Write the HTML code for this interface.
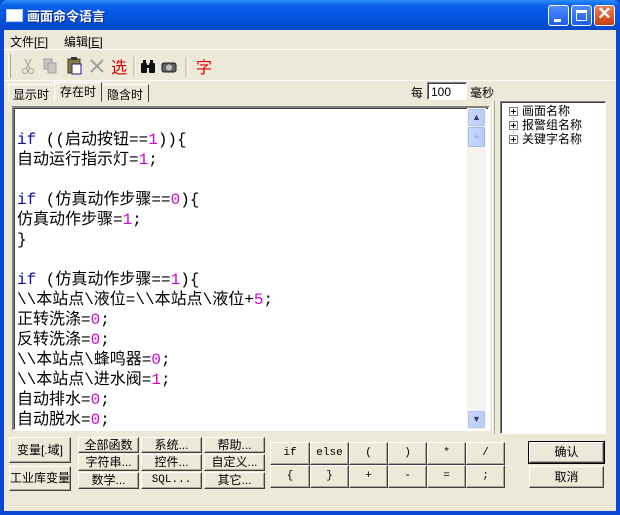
<!DOCTYPE html>
<html><head><meta charset="utf-8"><style>
*{margin:0;padding:0;box-sizing:border-box}
body{width:620px;height:515px;overflow:hidden;background:#0847d6;font-family:"Liberation Sans","Noto Sans CJK SC","WenQuanYi Zen Hei",sans-serif;font-size:12px;color:#000;position:relative}
.a{position:absolute}
#title{left:0;top:0;width:620px;height:30px;background:linear-gradient(#2a8cf7 0,#0a5ee8 20%,#0454e0 60%,#0348c8 100%);border-radius:7px 7px 0 0}
#client{left:4px;top:30px;width:612px;height:481px;background:#ece9d8}
.btn{position:absolute;background:#ece9d8;border:1px solid;border-color:#fff #404040 #404040 #fff;box-shadow:inset -1px -1px 0 #aca899;text-align:center;font-size:12px;white-space:nowrap}
.tb{position:absolute;width:21px;height:21px;border-radius:3px;border:1px solid #fff;background:linear-gradient(#4d8cfa,#1d5ef0)}
.code{left:12px;top:106px;width:478px;height:325px;background:#fff;border:2px solid;border-color:#808080 #fff #fff #808080;box-shadow:inset 1px 1px 0 #404040}
.ln{position:absolute;left:3px;font-size:16px;line-height:20px;white-space:pre;font-family:"Liberation Mono","Noto Sans CJK SC",monospace}
.k{color:#1010a0}.n{color:#d000d0}
.tr{position:absolute;left:8px;font-size:12px;line-height:14px}
.pl{display:inline-block;width:9px;height:9px;border:1px solid #808080;position:relative;vertical-align:-1px;margin-right:4px;background:#fff}
.pl:before{content:"";position:absolute;left:1px;top:3px;width:5px;height:1px;background:#000}
.pl:after{content:"";position:absolute;left:3px;top:1px;width:1px;height:5px;background:#000}
.op{font-family:"Liberation Mono",monospace;font-size:11px;line-height:21px}
</style></head><body>
<div id="title" class="a">
 <div class="a" style="left:6px;top:9px;width:17px;height:13px;background:#fff;border:1px solid #c0d0f0"></div>
 <div class="a" style="left:27px;top:6px;color:#fff;font-size:13px;font-weight:bold;text-shadow:1px 1px #0a2080">画面命令语言</div>
 <div class="tb" style="left:548px;top:5px"><div class="a" style="left:5px;top:13px;width:7px;height:3px;background:#fff"></div></div>
 <div class="tb" style="left:571px;top:5px"><div class="a" style="left:4px;top:4px;width:11px;height:11px;border:1px solid #fff;border-top-width:3px"></div></div>
 <div class="tb" style="left:594px;top:5px;background:linear-gradient(#e8845c,#c83c10)"><div class="a" style="left:0;top:-2px;width:19px;text-align:center;color:#fff;font-size:17px;font-weight:bold">✕</div></div>
</div>
<div id="client" class="a"></div>
<div class="a" style="left:10px;top:33px">文件[<u>F</u>]</div>
<div class="a" style="left:64px;top:33px">编辑[<u>E</u>]</div>
<div class="a" style="left:4px;top:49px;width:612px;height:1px;background:#aca899;border-bottom:1px solid #fff"></div>
<div class="a" style="left:8px;top:54px;width:3px;height:24px;border-left:1px solid #fff;border-right:1px solid #aca899"></div>
<svg class="a" style="left:18px;top:55px" width="210" height="24">
 <g stroke="#a0a0a0" fill="none"><circle cx="7" cy="16" r="2.5"/><circle cx="13" cy="16" r="2.5"/><path d="M8 14 L13 4 M12 14 L7 4"/></g>
 <g fill="#c8c8c8" stroke="#a0a0a0"><rect x="26" y="4" width="8" height="10"/><rect x="30" y="8" width="8" height="10"/></g>
 <rect x="50" y="4" width="12" height="14" fill="#8a7a40" stroke="#404020"/><rect x="54" y="9" width="9" height="10" fill="#fff" stroke="#202080"/><rect x="53" y="2" width="6" height="3" fill="#333"/>
 <path d="M73 5 L85 17 M85 5 L73 17" stroke="#a0a0a0" stroke-width="2"/>
 <text x="93" y="18" fill="#e00000" font-size="16" font-family="Noto Sans CJK SC">选</text>
 <line x1="116" y1="2" x2="116" y2="22" stroke="#aca899"/><line x1="117" y1="2" x2="117" y2="22" stroke="#fff"/>
 <g fill="#101010"><rect x="123" y="8" width="6" height="10" rx="1"/><rect x="131" y="8" width="6" height="10" rx="1"/><rect x="125" y="5" width="3" height="4"/><rect x="132" y="5" width="3" height="4"/><rect x="128" y="10" width="4" height="3"/></g>
 <rect x="144" y="8" width="14" height="9" rx="2" fill="#606060" stroke="#202020"/><circle cx="151" cy="12.5" r="3" fill="#c0c0c0"/>
 <line x1="168" y1="2" x2="168" y2="22" stroke="#aca899"/><line x1="169" y1="2" x2="169" y2="22" stroke="#fff"/>
 <text x="178" y="18" fill="#e00000" font-size="16" font-family="Noto Sans CJK SC">字</text>
</svg>
<div class="a" style="left:4px;top:80px;width:612px;height:1px;background:#aca899;border-bottom:1px solid #fff"></div>
<div class="a" style="left:8px;top:84px;width:44px;height:18px;border-left:1px solid #fff;border-top:1px solid #fff;font-size:12px;padding:1px 0 0 4px">显示时</div>
<div class="a" style="left:54px;top:82px;width:48px;height:20px;border:1px solid;border-color:#fff #404040 transparent #fff;background:#ece9d8;padding:0 0 0 5px">存在时</div>
<div class="a" style="left:103px;top:84px;width:46px;height:18px;border-right:1px solid #404040;border-top:1px solid #fff;padding:1px 0 0 4px">隐含时</div>
<div class="a" style="left:411px;top:84px">每</div>
<div class="a" style="left:427px;top:82px;width:40px;height:18px;background:#fff;border:1px solid;border-color:#808080 #fff #fff #808080;box-shadow:inset 1px 1px 0 #404040;padding:2px 0 0 3px">100</div>
<div class="a" style="left:470px;top:84px">毫秒</div>
<div class="a code">
 <div class="ln" style="top:22px"><span class="k">if</span> ((启动按钮==<span class="n">1</span>)){</div>
 <div class="ln" style="top:42px">自动运行指示灯=<span class="n">1</span>;</div>
 <div class="ln" style="top:82px"><span class="k">if</span> (仿真动作步骤==<span class="n">0</span>){</div>
 <div class="ln" style="top:102px">仿真动作步骤=<span class="n">1</span>;</div>
 <div class="ln" style="top:122px">}</div>
 <div class="ln" style="top:162px"><span class="k">if</span> (仿真动作步骤==<span class="n">1</span>){</div>
 <div class="ln" style="top:182px">\\本站点\液位=\\本站点\液位+<span class="n">5</span>;</div>
 <div class="ln" style="top:202px">正转洗涤=<span class="n">0</span>;</div>
 <div class="ln" style="top:222px">反转洗涤=<span class="n">0</span>;</div>
 <div class="ln" style="top:242px">\\本站点\蜂鸣器=<span class="n">0</span>;</div>
 <div class="ln" style="top:262px">\\本站点\进水阀=<span class="n">1</span>;</div>
 <div class="ln" style="top:282px">自动排水=<span class="n">0</span>;</div>
 <div class="ln" style="top:302px">自动脱水=<span class="n">0</span>;</div>
 <div class="a" style="left:453px;top:0;width:19px;height:321px;background:#f4f3ee"></div>
 <div class="a" style="left:454px;top:1px;width:17px;height:17px;border-radius:2px;background:linear-gradient(90deg,#c8d8fc,#b8ccf8);border:1px solid #b0c4f0;color:#2d4165;font-size:9px;text-align:center;line-height:15px">▲</div>
 <div class="a" style="left:454px;top:19px;width:17px;height:20px;border-radius:2px;background:linear-gradient(90deg,#c8d8fc,#b8ccf8);border:1px solid #a0b8ec;color:#8aa0d0;font-size:8px;text-align:center;line-height:18px">≡</div>
 <div class="a" style="left:454px;top:303px;width:17px;height:17px;border-radius:2px;background:linear-gradient(90deg,#c8d8fc,#b8ccf8);border:1px solid #b0c4f0;color:#2d4165;font-size:9px;text-align:center;line-height:15px">▼</div>
</div>
<div class="a" style="left:492px;top:101px;width:3px;height:333px;border-left:1px solid #fff;border-right:1px solid #aca899"></div>
<div class="a" style="left:500px;top:101px;width:106px;height:333px;background:#fff;border:1px solid;border-color:#808080 #fff #fff #808080;box-shadow:inset 1px 1px 0 #404040">
 <div class="a" style="left:12px;top:10px;height:28px;border-left:1px dotted #a0a0a0"></div>
 <div class="tr" style="top:2px"><span class="pl"></span>画面名称</div>
 <div class="tr" style="top:16px"><span class="pl"></span>报警组名称</div>
 <div class="tr" style="top:30px"><span class="pl"></span>关键字名称</div>
</div>
<div class="btn" style="left:9px;top:437px;width:62px;height:26px;line-height:24px">变量[.域]</div>
<div class="btn" style="left:9px;top:466px;width:62px;height:25px;line-height:23px">工业库变量</div>
<div class="btn" style="left:78px;top:437px;width:61px;height:16px;line-height:14px">全部函数</div>
<div class="btn" style="left:141px;top:437px;width:61px;height:16px;line-height:14px">系统...</div>
<div class="btn" style="left:204px;top:437px;width:61px;height:16px;line-height:14px">帮助...</div>
<div class="btn" style="left:78px;top:454px;width:61px;height:17px;line-height:15px">字符串...</div>
<div class="btn" style="left:141px;top:454px;width:61px;height:17px;line-height:15px">控件...</div>
<div class="btn" style="left:204px;top:454px;width:61px;height:17px;line-height:15px">自定义...</div>
<div class="btn" style="left:78px;top:472px;width:61px;height:17px;line-height:15px">数学...</div>
<div class="btn" style="left:141px;top:472px;width:61px;height:17px;line-height:15px;font-family:'Liberation Mono',monospace;font-size:11px">SQL...</div>
<div class="btn" style="left:204px;top:472px;width:61px;height:17px;line-height:15px">其它...</div>
<div class="btn op" style="left:270px;top:442px;width:40px;height:23px">if</div>
<div class="btn op" style="left:310px;top:442px;width:39px;height:23px">else</div>
<div class="btn op" style="left:349px;top:442px;width:39px;height:23px">(</div>
<div class="btn op" style="left:388px;top:442px;width:39px;height:23px">)</div>
<div class="btn op" style="left:427px;top:442px;width:39px;height:23px">*</div>
<div class="btn op" style="left:466px;top:442px;width:39px;height:23px">/</div>
<div class="btn op" style="left:270px;top:465px;width:40px;height:23px">{</div>
<div class="btn op" style="left:310px;top:465px;width:39px;height:23px">}</div>
<div class="btn op" style="left:349px;top:465px;width:39px;height:23px">+</div>
<div class="btn op" style="left:388px;top:465px;width:39px;height:23px">-</div>
<div class="btn op" style="left:427px;top:465px;width:39px;height:23px">=</div>
<div class="btn op" style="left:466px;top:465px;width:39px;height:23px">;</div>
<div class="btn" style="left:529px;top:442px;width:75px;height:21px;line-height:18px;outline:1px solid #000">确认</div>
<div class="btn" style="left:529px;top:466px;width:75px;height:22px;line-height:20px">取消</div>
</body></html>
